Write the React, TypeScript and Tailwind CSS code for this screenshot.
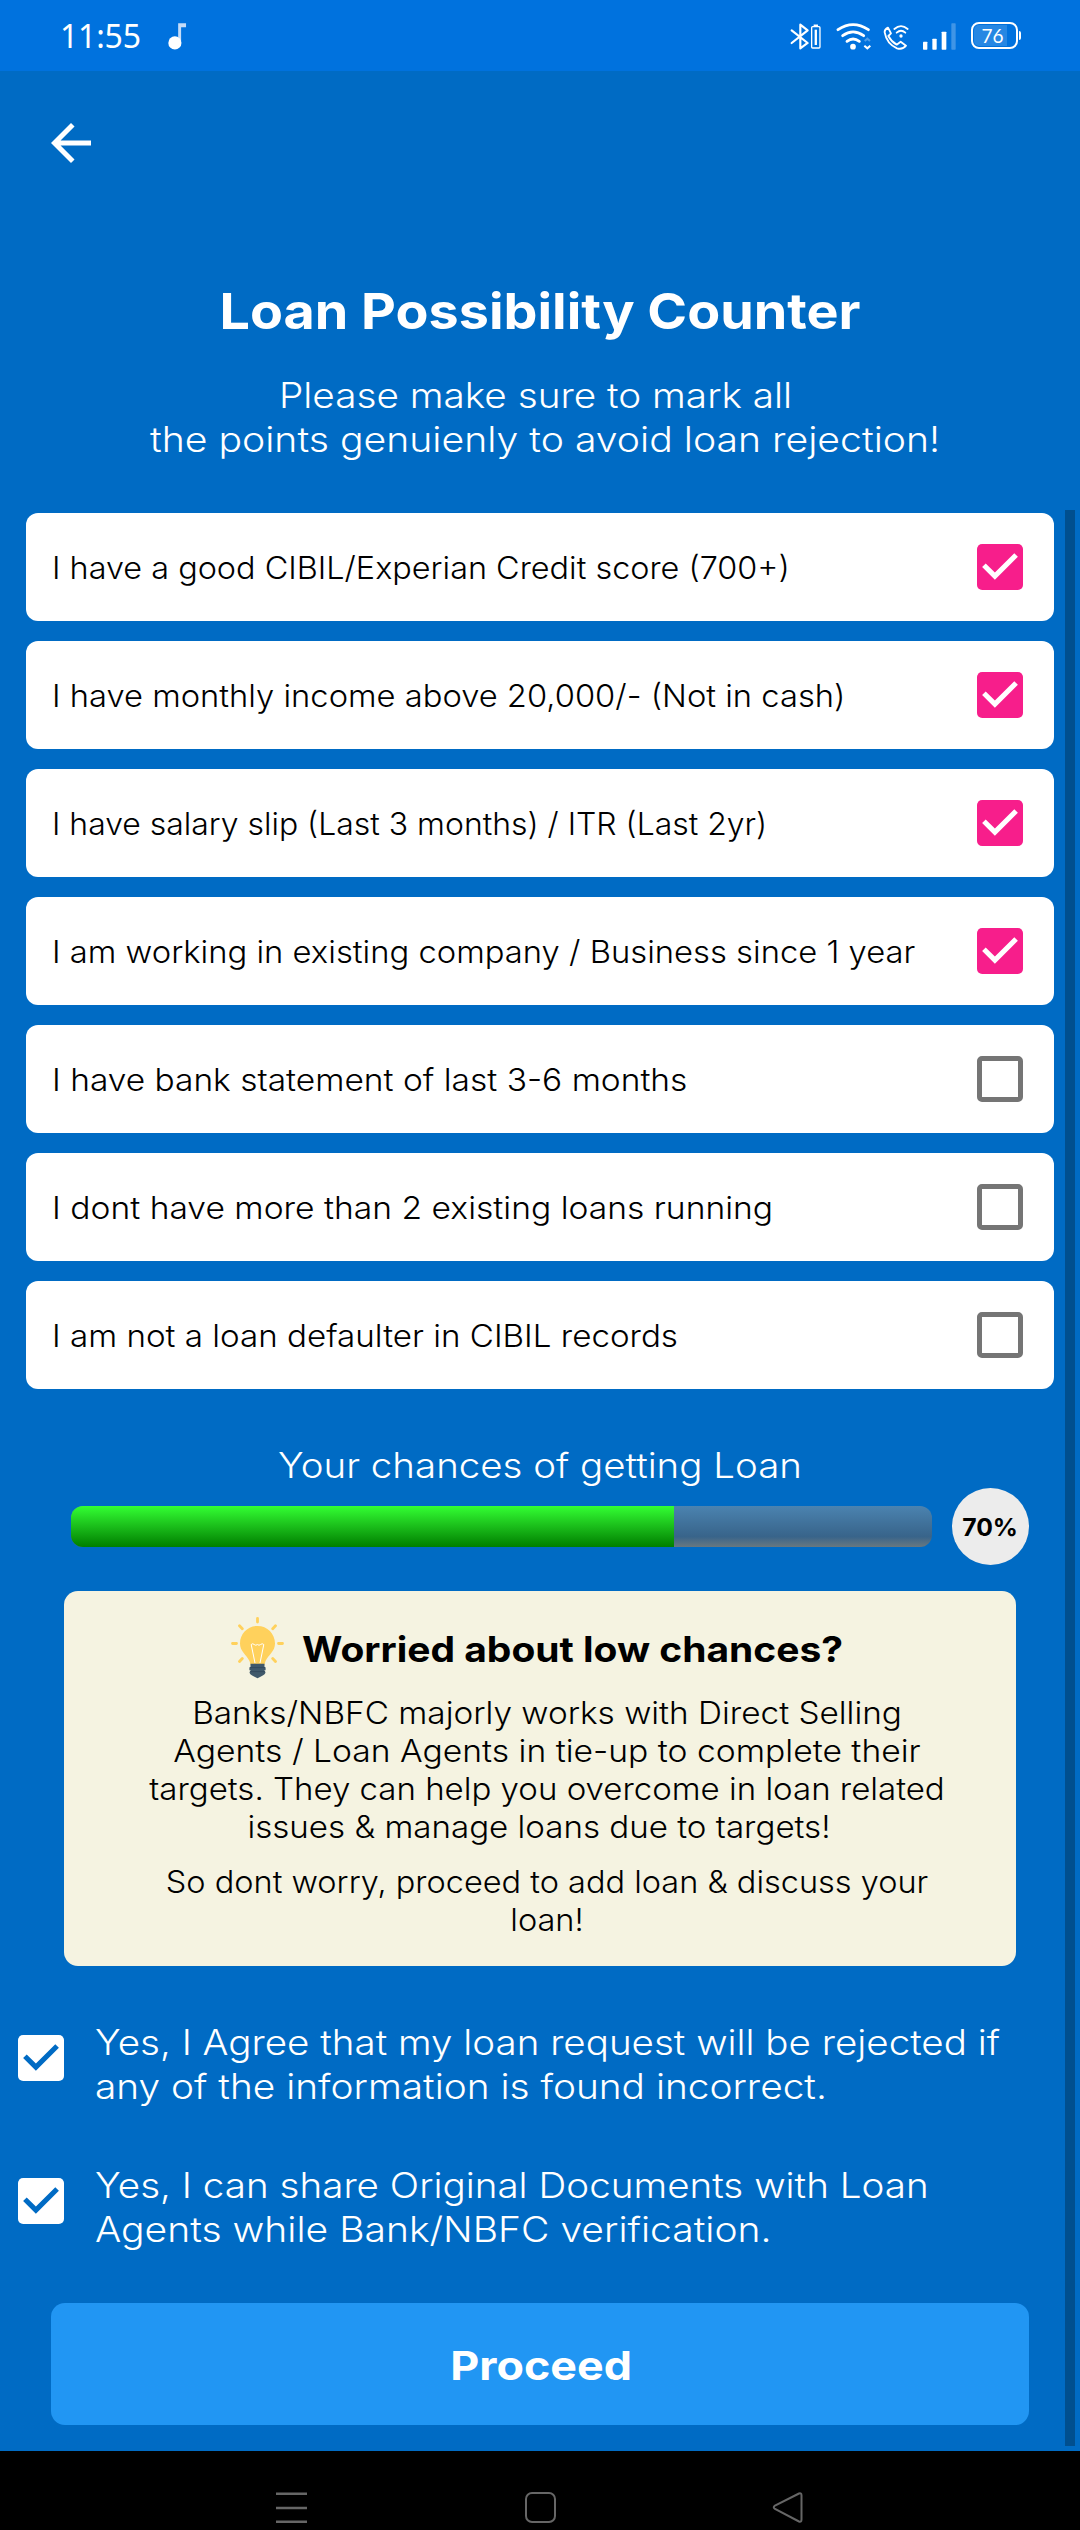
type Line = { text: string; stretch: string };

const CRITERIA: (Line & { checked: boolean })[] = [
  { text: "I have a good CIBIL/Experian Credit score (700+)", stretch: "scale-x-[1.045]", checked: true },
  { text: "I have monthly income above 20,000/- (Not in cash)", stretch: "scale-x-[1.055]", checked: true },
  { text: "I have salary slip (Last 3 months) / ITR (Last 2yr)", stretch: "scale-x-[1.03]", checked: true },
  { text: "I am working in existing company / Business since 1 year", stretch: "scale-x-[1.057]", checked: true },
  { text: "I have bank statement of last 3-6 months", stretch: "scale-x-[1.08]", checked: false },
  { text: "I dont have more than 2 existing loans running", stretch: "scale-x-[1.084]", checked: false },
  { text: "I am not a loan defaulter in CIBIL records", stretch: "scale-x-[1.069]", checked: false },
];

const ADVICE: Line[][] = [
  [
    { text: "Banks/NBFC majorly works with Direct Selling", stretch: "scale-x-[1.075]" },
    { text: "Agents / Loan Agents in tie-up to complete their", stretch: "scale-x-[1.085]" },
    { text: "targets. They can help you overcome in loan related", stretch: "scale-x-[1.065]" },
    { text: "issues & manage loans due to targets!", stretch: "scale-x-[1.068] pr-[15px]" },
  ],
  [
    { text: "So dont worry, proceed to add loan & discuss your", stretch: "scale-x-[1.048]" },
    { text: "loan!", stretch: "scale-x-[1.05]" },
  ],
];

const AGREEMENTS: Line[][] = [
  [
    { text: "Yes, I Agree that my loan request will be rejected if", stretch: "scale-x-[1.101]" },
    { text: "any of the information is found incorrect.", stretch: "scale-x-[1.109]" },
  ],
  [
    { text: "Yes, I can share Original Documents with Loan", stretch: "scale-x-[1.103]" },
    { text: "Agents while Bank/NBFC verification.", stretch: "scale-x-[1.115]" },
  ],
];

const CHANCE = 70;

function CheckedBox({ className, markClass }: { className: string; markClass: string }) {
  return (
    <svg viewBox="3 3 18 18" className={`size-[46px] shrink-0 ${className}`}>
      <rect x="3" y="3" width="18" height="18" rx="2" fill="currentColor" />
      <path className={markClass} d="M10 17l-5-5 1.41-1.41L10 14.17l7.59-7.59L19 8z" />
    </svg>
  );
}

function StatusBar() {
  return (
    <header className="flex h-[71px] items-center justify-between bg-[#0072de] pl-[60px] pr-[59px] font-normal text-white">
      <div className="flex items-center">
        <span className="w-[84px] font-['Noto_Sans',sans-serif] text-[32px] leading-none tracking-[-0.2px]">11:55</span>
        <svg viewBox="500 60 64 90" className="ml-[23px] h-[30px] w-[21px]">
          <path d="M534 66h24v12h-15v48h-9z" fill="#c4dcf8" />
          <circle cx="524" cy="126" r="20" fill="#fff" />
        </svg>
      </div>
      <div className="flex items-center">
        <svg viewBox="90 60 100 90" className="h-[30px] w-[33.3px]" fill="none" stroke="#fff">
          <path d="M95 88l48 38-22 16V71l22 17-48 38" strokeWidth="6.5" strokeLinejoin="round" strokeLinecap="round" />
          <rect x="155" y="77" width="25" height="64" rx="3" strokeWidth="4" />
          <path d="M161 73h13" strokeWidth="5" />
          <path d="M167.5 86v46" strokeWidth="7" />
        </svg>
        <svg viewBox="228 60 108 90" className="ml-[12.6px] h-[30px] w-[36px]" fill="none" stroke="#fff">
          <path d="M234 86q45-30 91 0" strokeWidth="8.5" strokeLinecap="round" />
          <path d="M248 104q31-23 63 0" strokeWidth="8.5" strokeLinecap="round" />
          <path d="M261 121q18-14 37 0" strokeWidth="8.5" strokeLinecap="round" />
          <circle cx="279" cy="137" r="8.5" fill="#fff" stroke="none" />
          <path d="M314 120l8-7 8 7" strokeWidth="6" opacity=".3" />
          <path d="M313 134l9 8 9-8" strokeWidth="6" />
        </svg>
        <svg viewBox="368 60 84 90" className="ml-[10.6px] h-[30px] w-[28px]" fill="none" stroke="#fff" strokeLinecap="round" strokeLinejoin="round">
          <path d="M386 80l9 17-8 8q9 17 25 26l12-9 16 12q-10 13-27 8-31-14-37-48-1-8 10-14z" strokeWidth="5.5" />
          <path d="M405 84q20-17 40 0" strokeWidth="5.5" />
          <path d="M412 95q13-12 26 0" strokeWidth="5.5" />
          <circle cx="425" cy="105" r="5" fill="#fff" stroke="none" />
        </svg>
        <svg viewBox="488 60 104 90" className="ml-[12px] h-[30px] w-[34.7px]" fill="#fff">
          <rect x="491" y="122" width="13" height="24" rx="2" />
          <rect x="519" y="113" width="13" height="33" rx="2" />
          <rect x="547" y="92" width="14" height="54" rx="2" />
          <rect x="576" y="67" width="13" height="79" rx="2" opacity=".25" />
        </svg>
        <div className="ml-[14px] flex h-[27px] w-[47px] rounded-[8px] border-2 border-white p-px">
          <div className="flex h-full w-[33px] items-center justify-center rounded-l-[5px] bg-white/15 pl-[4px] font-['Lato',sans-serif] text-[19px] leading-none">
            76
          </div>
        </div>
        <div className="ml-px h-[9px] w-[2px] rounded-r-sm bg-white" />
      </div>
    </header>
  );
}

function Bulb() {
  return (
    <svg viewBox="0 0 55 63" className="h-[63px] w-[55px] shrink-0" fill="none">
      <path
        d="M27.5 2.3v3.8M2.5 27.5h4M48.5 27.5h4M9.5 9.7l2.8 3M45.5 9.7l-2.8 3M9.5 45.5l2.8-3M45.5 45.5l-2.8-3"
        stroke="#ffd15c"
        strokeWidth="2.8"
        strokeLinecap="round"
      />
      <path d="M27.5 10C17.7 10 10 17.7 10 27.5c0 7.8 6.4 11.5 9.2 17 .7 1.5.9 2.5 1.1 4h14.4c.2-1.5.4-2.5 1.1-4 2.8-5.5 9.2-9.200 9.200-17C45 17.7 37.3 10 27.5 10z" fill="#ffd15c" />
      <path d="M25 47l-3.8-18.5q1.5-1.5 3 0 1.600 1.5 3.200 0 1.600 1.5 3.200 0 1.600-1.500 3.200 0L30 47" stroke="#fff" strokeWidth="1" />
      <path d="M20.5 47.7h14v3.500h1.100v3h-1.100v1.500h1c0 3-2.500 3.500-5 5l-3 1.500-3-1.500c-2.500-1.500-5-2-5-5h1v-1.500h-1.100v-3h1.100z" fill="#40596b" />
      <path d="M20 51.6h15M20 55.6h15" stroke="#334a5e" strokeWidth="1" />
    </svg>
  );
}

export default function App() {
  return (
    <div className="flex h-[2530px] w-[1080px] flex-col overflow-hidden bg-[#006bc4] font-['Inter',sans-serif] font-light text-white">
      <StatusBar />

      <div className="h-[210px] pl-[41px] pt-[41.5px]">
        <svg viewBox="0 0 24 24" className="size-[60px]" fill="#fff">
          <path d="M20 11H7.830l5.590-5.590L12 4l-8 8 8 8 1.410-1.410L7.830 13H20z" />
        </svg>
      </div>

      <div className="h-[229px] whitespace-nowrap text-center">
        <h1 className="scale-x-[1.077] text-[50px] font-bold leading-[61px]">Loan Possibility Counter</h1>
        <div className="mt-[31px] text-[35px] leading-[44px]">
          <p className="scale-x-[1.106] pr-[8px]">Please make sure to mark all</p>
          <p className="scale-x-[1.119] pl-[9px]">the points genuienly to avoid loan rejection!</p>
        </div>
      </div>

      <div className="flex h-[1941px] justify-between">
        <main className="w-[1054px] pt-[3px]">
          <ul className="flex flex-col gap-[20px] pl-[26px]">
            {CRITERIA.map((c) => (
              <li key={c.text} className="flex h-[108px] items-center justify-between rounded-[12px] bg-white pl-[26px] pr-[31px] text-black">
                <span className={`origin-left whitespace-nowrap pt-[2px] text-[31px] leading-[38px] ${c.stretch}`}>{c.text}</span>
                {c.checked ? (
                  <CheckedBox className="text-[#f71e8b]" markClass="fill-white" />
                ) : (
                  <span className="size-[46px] rounded-[5px] border-[5px] border-[#757575]" />
                )}
              </li>
            ))}
          </ul>

          <p className="ml-[26px] mt-[54px] scale-x-[1.099] text-center text-[35px] leading-[44px]">Your chances of getting Loan</p>
          <div className="mt-px flex h-[77px] items-center pl-[71px]">
            <div className="h-[41px] w-[861px] overflow-hidden rounded-[12px] bg-linear-to-b from-[#4b83b0] via-[#38648a] via-75% to-[#687880]">
              <div className="h-full bg-linear-to-b from-[#33ff33] to-[#007f00]" style={{ width: `${CHANCE}%` }} />
            </div>
            <div className="ml-[20px] flex size-[77px] items-center justify-center rounded-full bg-[#ececec] pt-[3px] text-[24px] font-bold text-black">
              <span className="scale-x-[1.03]">{CHANCE}%</span>
            </div>
          </div>

          <section className="ml-[64px] mt-[26px] h-[375px] w-[952px] whitespace-nowrap rounded-[14px] bg-[#f5f3e1] pt-[25px] text-black">
            <div className="flex h-[63px] pl-[166px]">
              <Bulb />
              <h2 className="ml-[17px] mt-[11px] origin-left scale-x-[1.113] text-[35px] font-bold leading-[44px]">Worried about low chances?</h2>
            </div>
            <div className="mt-[15px] flex flex-col gap-[17px] text-center text-[31px] leading-[38px]">
              {ADVICE.map((paragraph, i) => (
                <div key={i} className="ml-[14px]">
                  {paragraph.map((l) => (
                    <p key={l.text} className={l.stretch}>{l.text}</p>
                  ))}
                </div>
              ))}
            </div>
          </section>

          <div className="mt-[54px] flex flex-col gap-[55px] pl-[18px]">
            {AGREEMENTS.map((lines, i) => (
              <div key={i} className="flex h-[88px] items-start">
                <CheckedBox className="mt-[15px] text-white" markClass="fill-[#006bc4]" />
                <div className="ml-[31px] whitespace-nowrap text-[35px] leading-[44px]">
                  {lines.map((l) => (
                    <p key={l.text} className={`origin-left ${l.stretch}`}>{l.text}</p>
                  ))}
                </div>
              </div>
            ))}
          </div>

          <button className="ml-[51px] mt-[52px] flex h-[122px] w-[978px] items-center justify-center rounded-[14px] bg-[#2196f3] pl-[2px] pt-[4px] text-[40px] font-bold leading-none">
            <span className="scale-x-[1.12]">Proceed</span>
          </button>
        </main>
        <div className="mr-[5px] h-[1936px] w-[10px] bg-[#004f8f]" />
      </div>

      <nav className="flex h-[79px] items-start bg-black pl-[276px] pt-[40px]">
        <svg viewBox="0 0 32 32" className="size-[32px]" stroke="#666" strokeWidth="2.5">
          <path d="M0 2.8h31M0 17h31M0 30.7h31" />
        </svg>
        <svg viewBox="0 0 32 32" className="ml-[216px] size-[32px]" fill="none" stroke="#666" strokeWidth="2">
          <rect x="2" y="2" width="29" height="29" rx="6" />
        </svg>
        <svg viewBox="0 0 32 32" className="ml-[216px] size-[32px]" fill="none" stroke="#666" strokeWidth="2">
          <path d="M27 2.500L3 14.500q-2.500 1.700 0 3.500l24 12.500q2.500 1 2.500-2V4.500q0-3-2.500-2z" />
        </svg>
      </nav>
    </div>
  );
}
